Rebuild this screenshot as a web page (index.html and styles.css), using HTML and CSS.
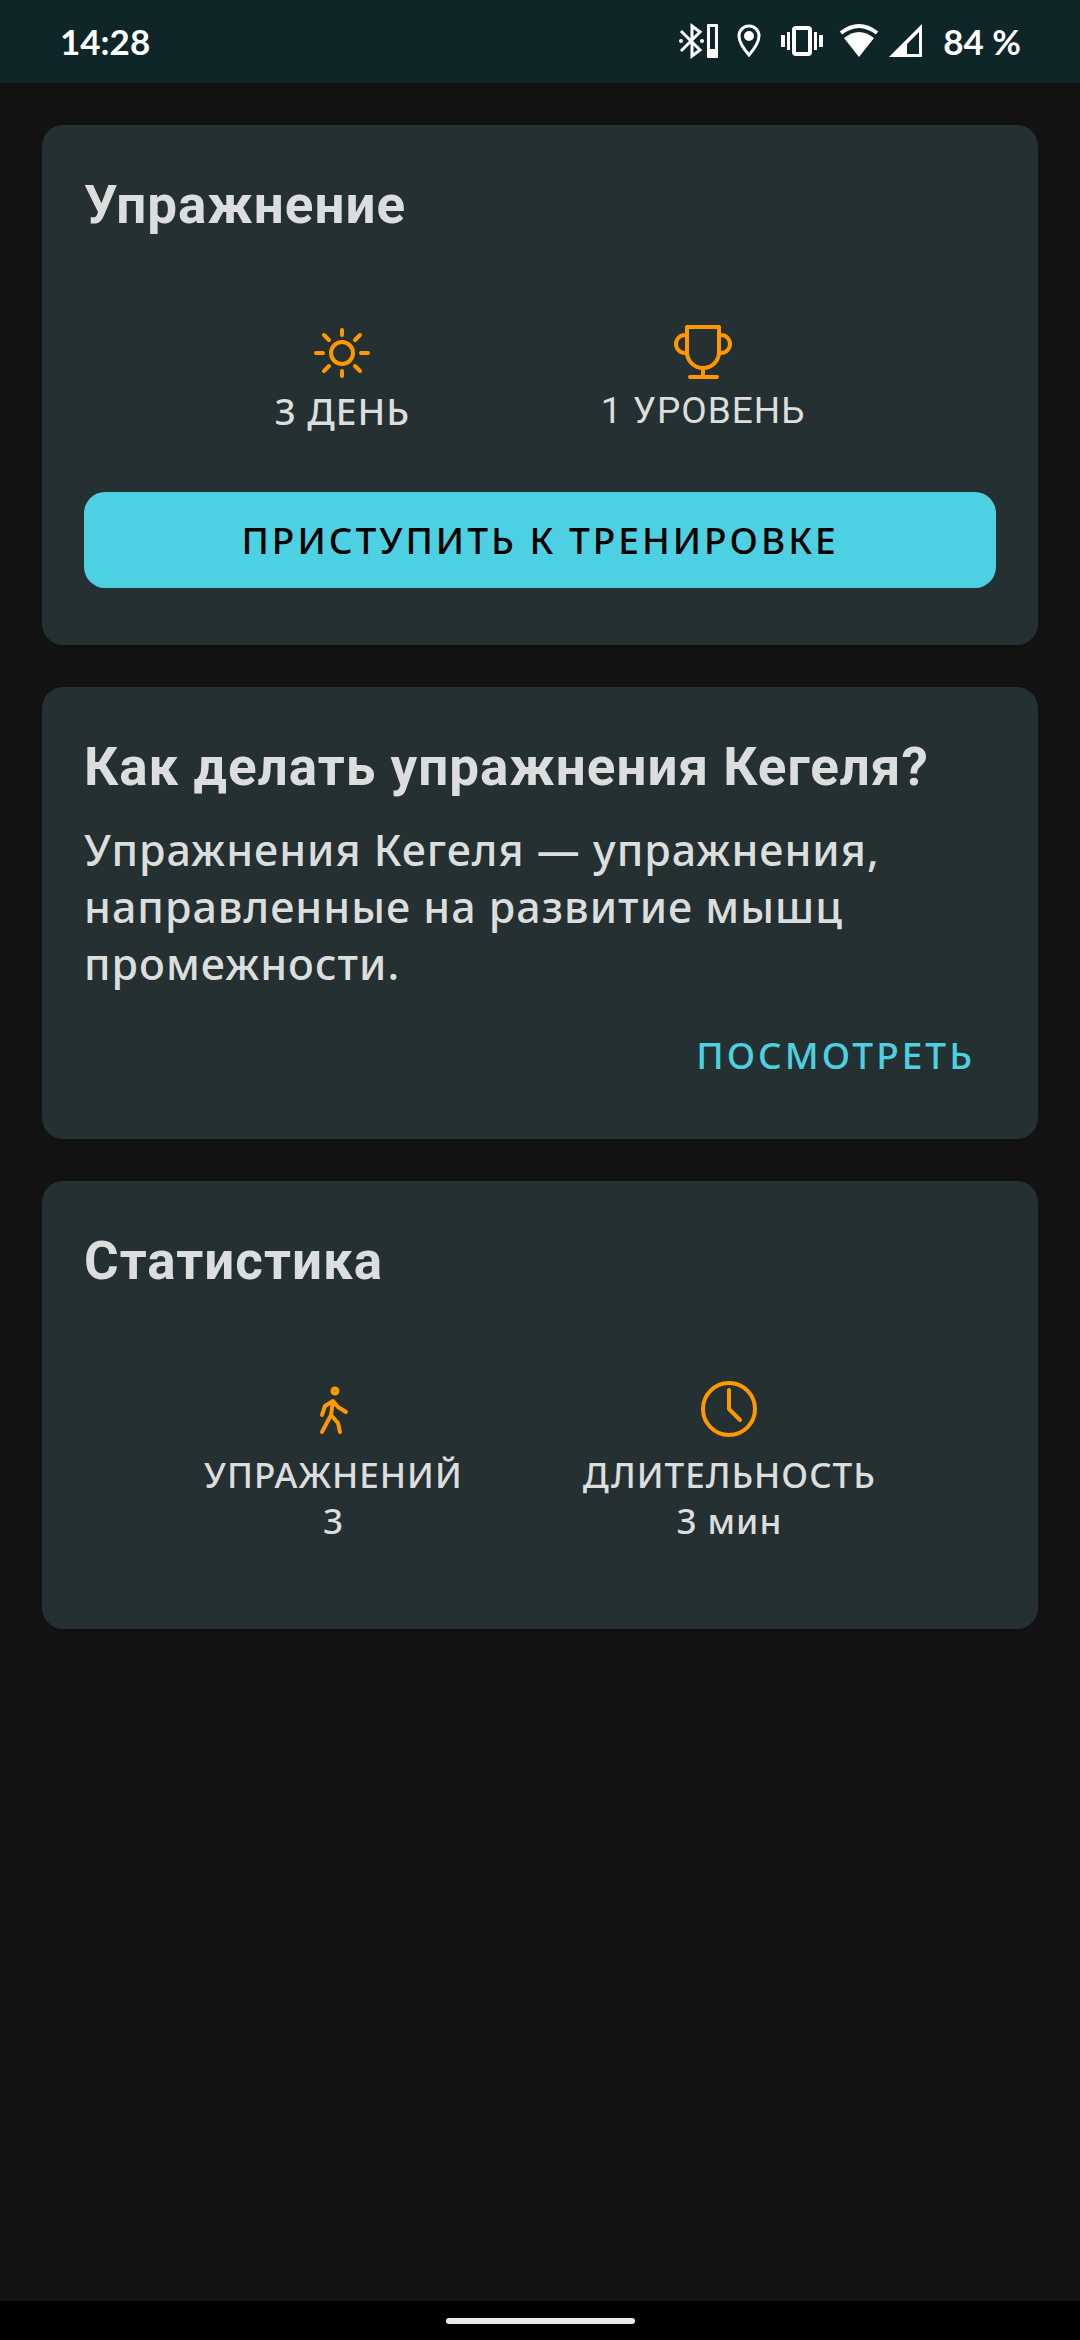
FILE: index.html
```html
<!DOCTYPE html>
<html lang="ru">
<head>
<meta charset="utf-8">
<meta name="viewport" content="width=device-width, initial-scale=1">
<title>Упражнения Кегеля</title>
<link rel="stylesheet" href="styles.css">
</head>
<body>
<div class="status-bar">
  <time class="clock">14:28</time>
  <div class="status-icons">
    <svg class="ic-bluetooth" width="40" height="36" viewBox="0 0 40 36" aria-hidden="true">
      <path d="M2 8l19 19-8 6V3l8 6L2 28" fill="none" stroke="currentColor" stroke-width="3"/>
      <circle cx="2" cy="18" r="2"/><circle cx="23" cy="18" r="2"/>
      <path d="M29 1h9a1 1 0 0 1 1 1v32a1 1 0 0 1-1 1h-9a1 1 0 0 1-1-1V2a1 1 0 0 1 1-1zm2 3v22h5V4z" fill-rule="evenodd"/>
    </svg>
    <svg class="ic-pin" width="24" height="36" viewBox="0 0 24 36" aria-hidden="true">
      <path d="M12 32C5 24 2 18 2 13a10 10 0 0 1 20 0c0 5-3 11-10 19z" fill="none" stroke="currentColor" stroke-width="3"/>
      <circle cx="12" cy="13" r="5"/>
    </svg>
    <svg class="ic-vibrate" width="42" height="36" viewBox="0 0 42 36" aria-hidden="true">
      <rect x="13" y="5" width="16" height="26" rx="2" fill="none" stroke="currentColor" stroke-width="4"/>
      <path d="M0 12h4v12H0zM6 9h3v18H6zM33 9h3v18h-3zM38 12h4v12h-4z"/>
    </svg>
    <svg class="ic-wifi" width="40" height="36" viewBox="0 0 40 36" aria-hidden="true">
      <path d="M2 10q18-14 36 0" fill="none" stroke="currentColor" stroke-width="4"/>
      <path d="M5 15q15-12 30 0L20 34z"/>
    </svg>
    <svg class="ic-signal" width="34" height="36" viewBox="0 0 34 36" aria-hidden="true">
      <path d="M0 34L33 1v33zM18 21v10h12V9z" fill-rule="evenodd"/>
    </svg>
    <span class="battery">84 %</span>
  </div>
</div>

<main class="content">
  <section class="card">
    <h2 class="title">Упражнение</h2>
    <div class="stats">
      <div class="stat">
        <svg class="icon" width="64" height="64" viewBox="0 0 64 64" aria-hidden="true">
          <circle cx="32" cy="32" r="11"/>
          <path d="M32 9v5M32 50v5M6 32h7M51 32h7M14 14l5 5M45 45l5 5M14 50l5-5M45 19l5-5"/>
        </svg>
        <span class="stat-main">3 ДЕНЬ</span>
      </div>
      <div class="stat">
        <svg class="icon" width="64" height="64" viewBox="0 0 64 64" aria-hidden="true">
          <path d="M16 6h32v25c0 9-7 16-16 16s-16-7-16-16zM32 47v9M19 56h27M16 14h-2a9 9 0 0 0 0 18h2M48 14h2a9 9 0 0 1 0 18h-2"/>
        </svg>
        <span class="stat-main level">1 УРОВЕНЬ</span>
      </div>
    </div>
    <button class="btn primary" type="button">ПРИСТУПИТЬ К ТРЕНИРОВКЕ</button>
  </section>

  <section class="card">
    <h2 class="title">Как делать упражнения Кегеля?</h2>
    <p class="text">Упражнения Кегеля — упражнения, направленные на развитие мышц промежности.</p>
    <div class="actions"><button class="btn flat" type="button">ПОСМОТРЕТЬ</button></div>
  </section>

  <section class="card statistics">
    <h2 class="title">Статистика</h2>
    <div class="stats">
      <div class="stat">
        <svg class="icon" width="64" height="64" viewBox="0 0 64 64" aria-hidden="true">
          <circle cx="34" cy="14" r="2" stroke-width="5"/>
          <path d="M21 38l3-9 8-5 5 6 8 5M32 24l-2 14-9 17M30 38l7 8 2 9"/>
        </svg>
        <span class="stat-label">УПРАЖНЕНИЙ</span>
        <span class="stat-label">3</span>
      </div>
      <div class="stat">
        <svg class="icon" width="64" height="64" viewBox="0 0 64 64" aria-hidden="true">
          <circle cx="32" cy="32" r="26"/>
          <path d="M32 13v19l11 11"/>
        </svg>
        <span class="stat-label">ДЛИТЕЛЬНОСТЬ</span>
        <span class="stat-label">3 мин</span>
      </div>
    </div>
  </section>
</main>

<div class="nav-bar"><span class="nav-pill"></span></div>
</body>
</html>
```

FILE: styles.css
```css
* { box-sizing: border-box; }

body {
  margin: 0;
  min-height: 100vh;
  display: flex;
  flex-direction: column;
  background: #121212;
  color: #dcdddd;
  font-family: "Noto Sans", "Open Sans", sans-serif;
  font-weight: 500;
}

.status-bar {
  display: flex;
  align-items: center;
  justify-content: space-between;
  height: 83px;
  padding: 0 59px 2px 60px;
  background: #0f2628;
  color: #fff;
  font: 700 35px/44px Lato, sans-serif;
}

.status-icons { display: flex; align-items: center; }
.status-icons svg { fill: currentColor; }
.ic-pin { margin-left: 18px; }
.ic-vibrate { margin-left: 20px; }
.ic-wifi { margin-left: 16px; }
.ic-signal { margin-left: 10px; }
.battery { margin-left: 20px; }

.content {
  flex: 1;
  display: flex;
  flex-direction: column;
  gap: 42px;
  padding: 42px;
}

.card {
  padding: 49px 42px 57px;
  border-radius: 21px;
  background: #243031;
}

.title {
  margin: 0;
  font: 700 53px/62px Roboto, sans-serif;
  letter-spacing: 1px;
}

.stats {
  display: flex;
  justify-content: space-evenly;
  padding-top: 85px;
}

.stat {
  display: flex;
  flex-direction: column;
  align-items: center;
}

.icon {
  fill: none;
  stroke: #ff9800;
  stroke-width: 4;
  stroke-linecap: round;
  stroke-linejoin: round;
}

.stat-main {
  font-size: 37px;
  line-height: 52px;
  letter-spacing: 1px;
}

.level { font-family: Roboto, sans-serif; font-weight: 400; }

.stat-label {
  font-size: 35px;
  line-height: 46px;
  letter-spacing: 1px;
}

.statistics { padding-bottom: 85px; }
.statistics .icon { margin-bottom: 11px; }

.btn {
  border: 0;
  font: inherit;
  font-size: 37px;
  line-height: 50px;
  letter-spacing: 3px;
}

.primary {
  width: 100%;
  margin-top: 55px;
  padding: 23px 21px;
  border-radius: 21px;
  background: #4dd0e1;
  color: #000;
}

.text {
  margin: 23px 0 0;
  font-size: 43px;
  line-height: 57px;
  letter-spacing: 1px;
}

.actions {
  display: flex;
  justify-content: flex-end;
  padding-top: 15px;
  margin-bottom: -21px;
}

.flat {
  padding: 23px 21px;
  background: none;
  color: #4dd0e1;
}

.nav-bar {
  display: flex;
  justify-content: center;
  height: 39px;
  padding-top: 17px;
  background: #000;
}

.nav-pill {
  width: 189px;
  height: 6px;
  border-radius: 3px;
  background: #ebe9ec;
}
```
